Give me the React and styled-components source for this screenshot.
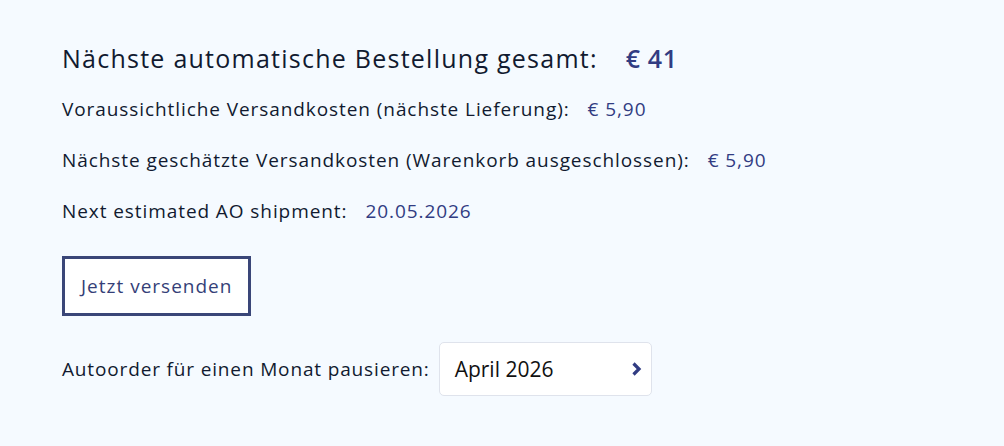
import React from "react";
import styled, { createGlobalStyle } from "styled-components";

const Global = createGlobalStyle`
  html, body { margin: 0; padding: 0; background: #f5faff; }
  body { font-family: "Open Sans", "Noto Sans", sans-serif; color: #111a30; }
`;

const Page = styled.div`
  width: 1004px;
  height: 446px;
  box-sizing: border-box;
  padding: 33px 0 0 62px;
  display: flex;
  flex-direction: column;
  align-items: flex-start;
`;

const Row = styled.div`
  display: flex;
  align-items: center;
  gap: ${(p) => p.$gap || 18}px;
  height: ${(p) => p.$h || 51}px;
  font-size: ${(p) => p.$size || 19}px;
  letter-spacing: ${(p) => p.$ls ?? 0.92}px;
`;

const Value = styled.span`
  color: #313c82;
  font-weight: ${(p) => p.$weight || 500};
  letter-spacing: ${(p) => p.$ls ?? 0.92}px;
`;

const Button = styled.button`
  margin-top: 20px;
  height: 60px;
  padding: 0 16px;
  border: 3px solid #3a4678;
  background: #fff;
  color: #353f78;
  font-family: "Open Sans", sans-serif;
  font-size: 19px;
  letter-spacing: 1px;
  font-weight: 500;
`;

const PauseRow = styled.div`
  margin-top: 26px;
  display: flex;
  align-items: center;
  gap: 9px;
  font-size: 19px;
  letter-spacing: 0.85px;
`;

const Select = styled.div`
  width: 213px;
  height: 54px;
  box-sizing: border-box;
  border: 1px solid #dfe3ec;
  border-radius: 5px;
  background: #fff;
  display: flex;
  align-items: center;
  justify-content: space-between;
  padding: 0 8px 0 15px;
  font-family: "Open Sans", sans-serif;
  font-size: 21px;
  letter-spacing: 0;
  color: #111;
`;

const Chevron = () => (
  <svg width="13" height="16" viewBox="0 0 13 16">
    <path d="M3.5 2.5 L9 8 L3.5 13.5" fill="none" stroke="#313c82" strokeWidth="3.2" />
  </svg>
);

export default function App() {
  return (
    <>
      <Global />
      <Page>
        <Row $size={25} $gap={28} $h={50} $ls={1.25}>
          <span>Nächste automatische Bestellung gesamt:</span>
          <Value $weight={600} $ls={0.6}>€ 41</Value>
        </Row>
        <Row>
          <span>Voraussichtliche Versandkosten (nächste Lieferung):</span>
          <Value>€ 5,90</Value>
        </Row>
        <Row>
          <span>Nächste geschätzte Versandkosten (Warenkorb ausgeschlossen):</span>
          <Value>€ 5,90</Value>
        </Row>
        <Row>
          <span>Next estimated AO shipment:</span>
          <Value>20.05.2026</Value>
        </Row>
        <Button>Jetzt versenden</Button>
        <PauseRow>
          <span>Autoorder für einen Monat pausieren:</span>
          <Select>
            <span>April 2026</span>
            <Chevron />
          </Select>
        </PauseRow>
      </Page>
    </>
  );
}
